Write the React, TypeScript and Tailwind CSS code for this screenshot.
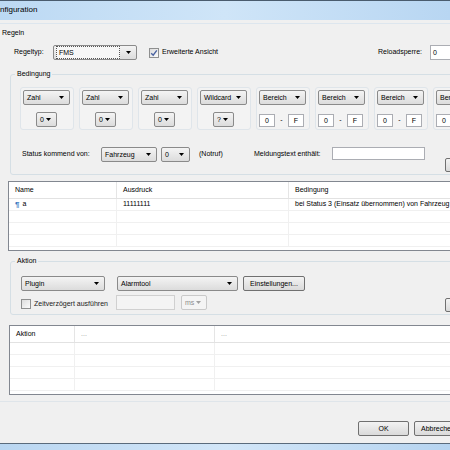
import { clsx } from 'clsx'

function Arrow({ disabled }: { disabled?: boolean }) {
  return (
    <svg width="5" height="3" viewBox="0 0 5 3" className="shrink-0">
      <path d="M0 0h5L2.5 3z" fill={disabled ? '#a0a0a0' : '#000'} />
    </svg>
  )
}

function Combo({ label, className, disabled, focused }: { label: string; className: string; disabled?: boolean; focused?: boolean }) {
  return (
    <div
      className={clsx(
        'flex h-[15px] shrink-0 items-center justify-between rounded-[2px] border pl-[3px] pr-[5px]',
        disabled ? 'border-[#c9c9c9] bg-[#f4f4f4] text-[#8d8d8d]' : 'border-[#8a8a8a] bg-gradient-to-b from-[#f4f4f4] to-[#dcdcdc]',
        className,
      )}
    >
      <span className={clsx('leading-none', focused && 'flex-1 border border-dotted border-[#555] px-[2px] py-[2px] mr-[6px] -ml-[1px] bg-[#f7f7f7]')}>{label}</span>
      <Arrow disabled={disabled} />
    </div>
  )
}

function TextBox({ className, value, disabled }: { className: string; value?: string; disabled?: boolean }) {
  return (
    <div
      className={clsx(
        'flex shrink-0 items-center border px-[2px] leading-none',
        disabled ? 'border-[#d0d0d0] bg-[#f4f4f4]' : 'border-[#abadb3] bg-white',
        className,
      )}
    >
      {value}
    </div>
  )
}

function Button({ label, className }: { label: string; className: string }) {
  return (
    <div
      className={clsx(
        'flex shrink-0 items-center justify-center rounded-[2px] border border-[#707070] bg-gradient-to-b from-[#f3f3f3] to-[#dadada] leading-none',
        className,
      )}
    >
      {label}
    </div>
  )
}

function CheckBox({ checked }: { checked?: boolean }) {
  return (
    <div className="flex h-[10px] w-[10px] shrink-0 items-center justify-center border border-[#8e8f8f] bg-gradient-to-br from-[#dcdcdc] to-[#fbfbfb]">
      {checked && (
        <svg width="8" height="8" viewBox="0 0 8 8">
          <path d="M1.2 4.2 3.2 6.2 6.8 1.4" fill="none" stroke="#4a62a0" strokeWidth="1.4" />
        </svg>
      )}
    </div>
  )
}

const PANELS = [
  { type: 'Zahl', sub: '0' },
  { type: 'Zahl', sub: '0' },
  { type: 'Zahl', sub: '0' },
  { type: 'Wildcard', sub: '?' },
  { type: 'Bereich', sub: '' },
  { type: 'Bereich', sub: '' },
  { type: 'Bereich', sub: '' },
  { type: 'Bereich', sub: '' },
]

function Panel({ type, sub }: { type: string; sub: string }) {
  return (
    <div className="flex h-[43px] w-[54px] shrink-0 flex-col rounded-[3px] border border-[#dfe5ea] bg-[#f3f3f3] pl-[2px] pt-[2px]">
      <Combo label={type} className="w-[47px]" />
      {type === 'Bereich' ? (
        <div className="mt-[9px] flex items-center">
          <TextBox className="h-[13px] w-[16px] justify-center" value="0" />
          <span className="w-[13px] text-center">-</span>
          <TextBox className="h-[13px] w-[16px] justify-center" value="F" />
        </div>
      ) : (
        <div className="mt-[7px] flex">
          <Combo label={sub} className="ml-[13px] w-[21px]" />
        </div>
      )}
    </div>
  )
}

function Group({ label, className, children }: { label: string; className: string; children: React.ReactNode }) {
  return (
    <div className={clsx('relative ml-[10px] w-[460px] rounded-[3px] border border-[#d5dfe5]', className)}>
      <span className="absolute -top-[6px] left-[4px] bg-[#f0f0f0] px-[2px] leading-[10px]">{label}</span>
      {children}
    </div>
  )
}

function Grid({ cols, header, rows, className }: { cols: string[]; header: string[]; rows: React.ReactNode[][]; className: string }) {
  return (
    <div className={clsx('w-[460px] overflow-hidden border border-[#828790] bg-white', className)}>
      <div className="flex h-[17px] border-b border-[#e2e2e2]">
        {header.map((h, i) => (
          <div key={i} className={clsx('flex shrink-0 items-center border-r border-[#e5e5e5] pl-[6px]', cols[i], h === '...' && 'text-[#9a9a9a]')}>
            {h}
          </div>
        ))}
      </div>
      {rows.map((r, ri) => (
        <div key={ri} className="flex h-[12px] border-b border-[#f0f0f0]">
          {r.map((c, i) => (
            <div key={i} className={clsx('flex shrink-0 items-center border-r border-[#f0f0f0] pl-[6px]', cols[i])}>
              {c}
            </div>
          ))}
        </div>
      ))}
    </div>
  )
}

export default function App() {
  const empty = ['', '', '']
  return (
    <div className="relative h-[450px] w-[450px] overflow-hidden bg-[#f0f0f0] font-['Liberation_Sans',Arial,sans-serif] text-[7px] text-black">
      <div className="flex h-[20px] items-center border-t border-[#4a5c6e] bg-gradient-to-r from-[#bcd9f3] via-[#cfe5f8] to-[#b8d6f2] pb-[1px] text-[8px]">
        nfiguration
      </div>
      <div className="mt-[3px] border-t border-[#dde6ee]" />

      <div className="ml-[2px] mt-[4px] h-[10px] leading-[10px]">Regeln</div>

      <div className="mt-[7px] flex h-[15px] items-center">
        <span className="w-[53px] shrink-0 pl-[14px]">Regeltyp:</span>
        <Combo label="FMS" className="w-[84px]" focused />
        <div className="ml-[12px]">
          <CheckBox checked />
        </div>
        <span className="ml-[3px] w-[216px] shrink-0">Erweiterte Ansicht</span>
        <span className="w-[52px] shrink-0">Reloadsperre:</span>
        <TextBox className="h-[15px] w-[30px]" value="0" />
      </div>

      <Group label="Bedingung" className="mt-[14px] h-[101px] pl-[9px] pt-[12px]">
        <div className="flex gap-[5px]">
          {PANELS.map((p, i) => (
            <Panel key={i} type={p.type} sub={p.sub} />
          ))}
        </div>
        <div className="mt-[17px] flex items-start">
          <span className="flex h-[15px] w-[81px] shrink-0 items-center pl-[2px]">Status kommend von:</span>
          <Combo label="Fahrzeug" className="w-[56px]" />
          <Combo label="0" className="ml-[4px] w-[29px]" />
          <span className="ml-[9px] flex h-[15px] w-[55px] shrink-0 items-center">(Notruf)</span>
          <span className="flex h-[15px] w-[78px] shrink-0 items-center">Meldungstext enthält:</span>
          <TextBox className="h-[13px] w-[93px]" />
          <Button label="" className="ml-[20px] mt-[11px] h-[14px] w-[40px]" />
        </div>
      </Group>

      <Grid
        className="ml-[8px] mt-[6px] h-[70px]"
        cols={['w-[108px]', 'w-[172px]', 'w-[200px]']}
        header={['Name', 'Ausdruck', 'Bedingung']}
        rows={[
          [
            <span className="flex items-center gap-[3px]">
              <span className="text-[8px] font-bold text-[#3c77c0]">¶</span>a
            </span>,
            '11111111',
            <span className="whitespace-nowrap">bei Status 3 (Einsatz übernommen) von Fahrzeug</span>,
          ],
          empty,
          empty,
          empty,
        ]}
      />

      <Group label="Aktion" className="mt-[10px] h-[54px] pl-[10px] pt-[14px]">
        <div className="flex items-center">
          <Combo label="Plugin" className="w-[84px]" />
          <Combo label="Alarmtool" className="ml-[12px] w-[121px]" />
          <Button label="Einstellungen..." className="ml-[5px] h-[15px] w-[62px]" />
        </div>
        <div className="mt-[4px] flex items-start">
          <div className="mt-[4px]">
            <CheckBox />
          </div>
          <span className="ml-[3px] mt-[4px] w-[82px] shrink-0 text-[#222]">Zeitverzögert ausführen</span>
          <TextBox className="h-[15px] w-[59px]" disabled />
          <Combo label="ms" className="ml-[6px] w-[26px]" disabled />
          <Button label="" className="ml-[238px] mt-[3px] h-[14px] w-[40px]" />
        </div>
      </Group>

      <Grid
        className="ml-[9px] mt-[10px] h-[70px]"
        cols={['w-[65px]', 'w-[140px]', 'w-[250px]']}
        header={['Aktion', '...', '...']}
        rows={[empty, empty, empty, empty]}
      />

      <div className="mt-[6px] border-t border-[#dfe5ea]" />

      <div className="mt-[19px] flex h-[15px]">
        <Button label="OK" className="ml-[358px] w-[51px]" />
        <Button label="Abbrechen" className="ml-[5px] w-[51px] justify-start pl-[6px]" />
      </div>

      <div className="absolute bottom-0 left-0 right-0 h-[7px] border-t border-[#5a6b7c] bg-gradient-to-r from-[#b9d6f1] via-[#d2e6f8] to-[#b6d4f0]" />
    </div>
  )
}
